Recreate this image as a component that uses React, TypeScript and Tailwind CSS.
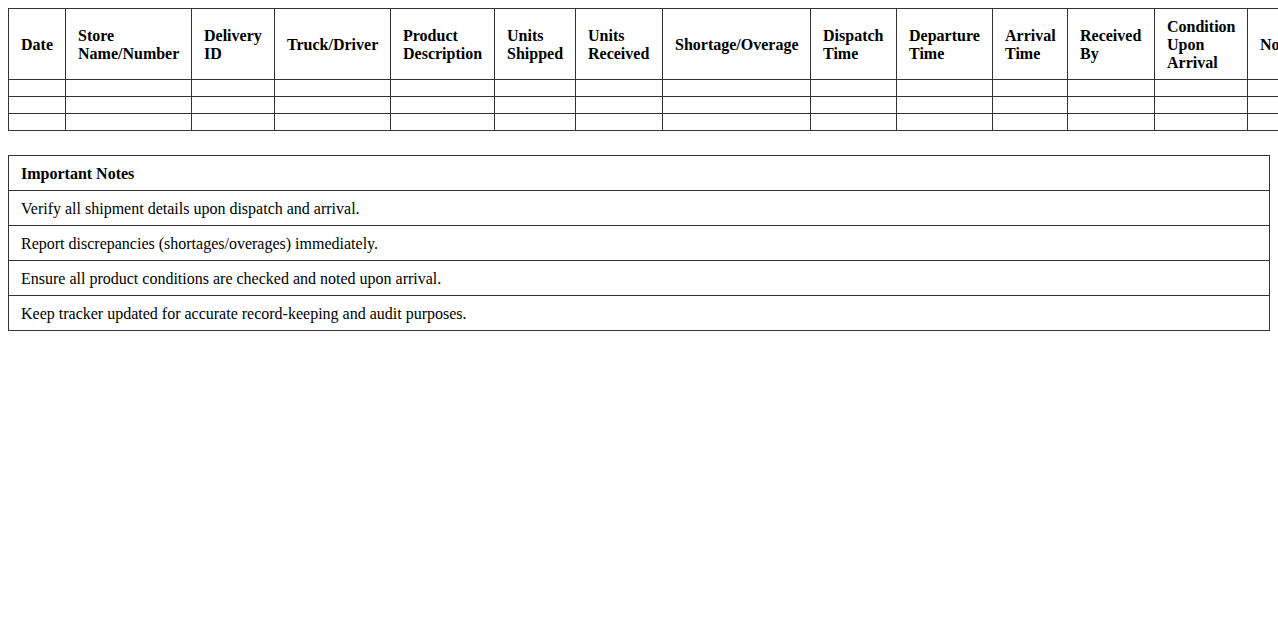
const columns = [
  { label: ['Date'], width: 57 },
  { label: ['Store', 'Name/Number'], width: 126 },
  { label: ['Delivery', 'ID'], width: 83 },
  { label: ['Truck/Driver'], width: 116 },
  { label: ['Product', 'Description'], width: 104 },
  { label: ['Units', 'Shipped'], width: 81 },
  { label: ['Units', 'Received'], width: 87 },
  { label: ['Shortage/Overage'], width: 148 },
  { label: ['Dispatch', 'Time'], width: 86 },
  { label: ['Departure', 'Time'], width: 96 },
  { label: ['Arrival', 'Time'], width: 75 },
  { label: ['Received', 'By'], width: 87 },
  { label: ['Condition', 'Upon', 'Arrival'], width: 93 },
  { label: ['Notes'], width: 80 },
];

const notes = [
  'Verify all shipment details upon dispatch and arrival.',
  'Report discrepancies (shortages/overages) immediately.',
  'Ensure all product conditions are checked and noted upon arrival.',
  'Keep tracker updated for accurate record-keeping and audit purposes.',
];

const tableWidth = columns.reduce((sum, c) => sum + c.width, 0) + 1;

export default function App() {
  return (
    <div className="min-h-screen bg-white p-2 text-[16px] leading-[18px] text-black font-['Liberation_Serif','Times_New_Roman',serif]">
      {/* Tracker table */}
      <table className="table-fixed border-collapse" style={{ width: tableWidth }}>
        <colgroup>
          {columns.map((c, i) => (
            <col key={i} style={{ width: c.width }} />
          ))}
        </colgroup>
        <thead>
          <tr>
            {columns.map((c, i) => (
              <th
                key={i}
                className="border border-[#333] px-3 pt-[9px] pb-[7px] text-left align-middle font-bold whitespace-nowrap"
              >
                {c.label.map((line, j) => (
                  <div key={j}>{line}</div>
                ))}
              </th>
            ))}
          </tr>
        </thead>
        <tbody>
          {[0, 1, 2].map((r) => (
            <tr key={r}>
              {columns.map((_, i) => (
                <td key={i} className="border border-[#333] px-3 py-2"></td>
              ))}
            </tr>
          ))}
        </tbody>
      </table>

      {/* Notes */}
      <table className="mt-6 w-full border-collapse">
        <thead>
          <tr>
            <th className="border border-[#333] px-3 pt-[9px] pb-[7px] text-left font-bold">Important Notes</th>
          </tr>
        </thead>
        <tbody>
          {notes.map((n, i) => (
            <tr key={i}>
              <td className="border border-[#333] px-3 pt-[9px] pb-[7px]">{n}</td>
            </tr>
          ))}
        </tbody>
      </table>
    </div>
  );
}
